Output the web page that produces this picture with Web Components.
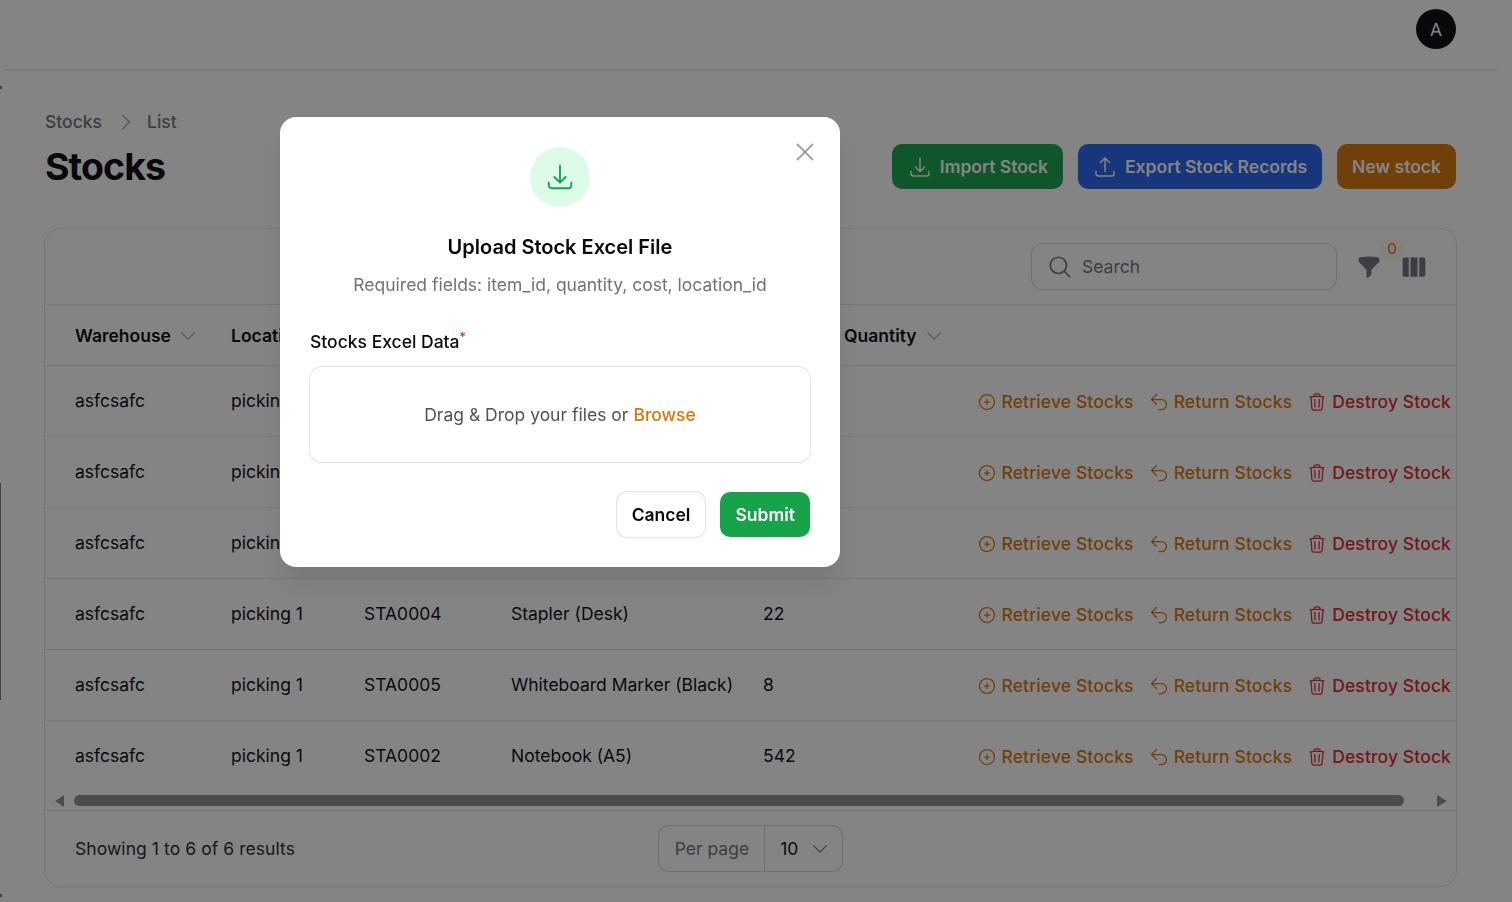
<!DOCTYPE html>
<html lang="en">
<head>
<meta charset="utf-8">
<title>Stocks</title>
<style>
  html, body { margin: 0; height: 100%; overflow: hidden; background: #fff; }
  body { font-family: Inter, "Liberation Sans", sans-serif; color: #09090b; font-size: 17.5px; }
</style>
</head>
<body>
<stock-page></stock-page>
<script>
const ICONS = {
  tray: '<path d="M3 16.5v2.25A2.25 2.25 0 005.25 21h13.5A2.25 2.25 0 0021 18.75V16.5M16.5 12L12 16.5m0 0L7.5 12m4.5 4.5V3"/>',
  upload: '<path d="M3 16.5v2.25A2.25 2.25 0 005.25 21h13.5A2.25 2.25 0 0021 18.75V16.5m-13.5-9L12 3m0 0l4.5 4.5M12 3v13.5"/>',
  close: '<path d="M6 18L18 6M6 6l12 12"/>',
  plus: '<path d="M12 9v6m3-3H9m12 0a9 9 0 11-18 0 9 9 0 0118 0z"/>',
  back: '<path d="M9 15L3 9m0 0l6-6M3 9h12a6 6 0 010 12h-3"/>',
  trash: '<path d="M14.74 9l-.346 9m-4.788 0L9.26 9m9.968-3.21c.342.052.682.107 1.022.166m-1.022-.165L18.16 19.673a2.25 2.25 0 01-2.244 2.077H8.084a2.25 2.25 0 01-2.244-2.077L4.772 5.79m14.456 0a48.108 48.108 0 00-3.478-.397m-12 .562c.34-.059.68-.114 1.022-.165m0 0a48.11 48.11 0 013.478-.397m7.5 0v-.916c0-1.18-.91-2.164-2.09-2.201a51.964 51.964 0 00-3.32 0c-1.18.037-2.09 1.022-2.09 2.201v.916m7.5 0a48.667 48.667 0 00-7.5 0"/>',
  search: '<path d="M21 21l-5.197-5.197m0 0A7.5 7.5 0 105.196 5.196a7.5 7.5 0 0010.607 10.607z"/>',
  down: '<path d="M19.5 8.25l-7.5 7.5-7.5-7.5"/>',
  right: '<path d="M8.25 4.5l7.5 7.5-7.5 7.5"/>',
  funnel: '<path fill="currentColor" stroke="none" d="M3.792 2.938A49.069 49.069 0 0112 2.25c2.797 0 5.54.236 8.209.688a1.857 1.857 0 011.541 1.836v1.044a3 3 0 01-.879 2.121l-6.182 6.182a1.5 1.5 0 00-.439 1.061v2.927a3 3 0 01-1.658 2.684l-1.757.878A.75.75 0 019.75 21v-5.818a1.5 1.5 0 00-.44-1.06L3.13 7.938a3 3 0 01-.879-2.121V4.774c0-.897.64-1.683 1.542-1.836z"/>',
  columns: '<path fill="currentColor" stroke="none" d="M15 3.75H9v16.5h6V3.75zM16.5 20.25h3.375c1.035 0 1.875-.84 1.875-1.875V5.625c0-1.036-.84-1.875-1.875-1.875H16.5v16.5zM4.125 3.75H7.5v16.5H4.125a1.875 1.875 0 01-1.875-1.875V5.625c0-1.036.84-1.875 1.875-1.875z"/>'
};

class HeroIcon extends HTMLElement {
  constructor() {
    super();
    const size = this.getAttribute('size') || 20;
    const sw = this.getAttribute('stroke') || 1.5;
    this.attachShadow({ mode: 'open' }).innerHTML = `
      <style>:host { display: inline-flex; flex: none; } svg { display: block; }</style>
      <svg width="${size}" height="${size}" viewBox="0 0 24 24" fill="none" stroke="currentColor" stroke-width="${sw}" stroke-linecap="round" stroke-linejoin="round">${ICONS[this.getAttribute('name')]}</svg>`;
  }
}
customElements.define('hero-icon', HeroIcon);

class UiButton extends HTMLElement {
  constructor() {
    super();
    const icon = this.getAttribute('icon');
    this.attachShadow({ mode: 'open' }).innerHTML = `
      <style>
        :host { display: inline-flex; align-items: center; gap: 8px; height: 45px; box-sizing: border-box; padding: 0 15px; border-radius: 10px;
          font-size: 17.5px; font-weight: 600; color: #fff; background: var(--bg, #16a34a); white-space: nowrap; }
        :host([plain]) { color: #09090b; background: #fff; box-shadow: 0 0 0 1px #e4e4e7, 0 1px 2px rgba(0,0,0,.05); }
      </style>
      ${icon ? `<hero-icon name="${icon}" size="24"></hero-icon>` : ''}<slot></slot>`;
  }
}
customElements.define('ui-button', UiButton);

class AppTopbar extends HTMLElement {
  constructor() {
    super();
    this.attachShadow({ mode: 'open' }).innerHTML = `
      <style>
        :host { display: flex; justify-content: flex-end; align-items: center; box-sizing: border-box; height: 70px; margin: 0 15px 0 5px; padding: 0 41px 11px 0; border-bottom: 1px solid #e4e4e7; box-shadow: 0 1px 1px rgba(0,0,0,.04); }
        .avatar { width: 40px; height: 40px; border-radius: 50%; background: #09090b; color: #fff; display: flex; align-items: center; justify-content: center; font-size: 17.5px; }
      </style>
      <div class="avatar">A</div>`;
  }
}
customElements.define('app-topbar', AppTopbar);

class PageHeader extends HTMLElement {
  constructor() {
    super();
    this.attachShadow({ mode: 'open' }).innerHTML = `
      <style>
        :host { display: flex; justify-content: space-between; align-items: flex-end; height: 119px; box-sizing: border-box; padding-top: 37px; }
        .title { padding-bottom: 1px; }
        .crumbs { display: flex; align-items: center; gap: 12px; color: #71717a; font-size: 17.5px; font-weight: 500; line-height: 24px; }
        .crumbs hero-icon { color: #a1a1aa; margin: 0 -2px 0 1px; }
        h1 { margin: 11px 0 0; font-size: 37.5px; line-height: 43px; font-weight: 700; letter-spacing: -.94px; }
        .actions { display: flex; gap: 15px; }
      </style>
      <div class="title">
        <div class="crumbs"><span>Stocks</span><hero-icon name="right" size="22"></hero-icon><span>List</span></div>
        <h1>Stocks</h1>
      </div>
      <div class="actions">
        <ui-button icon="tray" style="--bg:#16a34a;padding-left:16px">Import Stock</ui-button>
        <ui-button icon="upload" style="--bg:#2563eb">Export Stock Records</ui-button>
        <ui-button style="--bg:#d97706">New stock</ui-button>
      </div>`;
  }
}
customElements.define('page-header', PageHeader);

const COLS = '156px 133px 147px 252px 81px 1fr auto';

class TableHead extends HTMLElement {
  constructor() {
    super();
    const sort = t => `<span class="th">${t}<hero-icon name="down" size="20"></hero-icon></span>`;
    this.attachShadow({ mode: 'open' }).innerHTML = `
      <style>
        :host { display: grid; grid-template-columns: ${COLS}; align-items: center; height: 61px; padding: 1px 0 0 30px; box-sizing: border-box; border-bottom: 1px solid #e4e4e7; font-weight: 600; font-size: 17.5px; }
        .th { display: inline-flex; align-items: center; gap: 7px; white-space: nowrap; }
        hero-icon { color: #a1a1aa; }
      </style>
      ${sort('Warehouse')}${sort('Location')}<span></span><span></span><span></span>${sort('Quantity')}`;
  }
}
customElements.define('table-head', TableHead);

class ActionLink extends HTMLElement {
  constructor() {
    super();
    this.attachShadow({ mode: 'open' }).innerHTML = `
      <style>
        :host { display: inline-flex; align-items: center; gap: 5px; color: var(--c); font-weight: 500; font-size: 17.5px; letter-spacing: .12px; white-space: nowrap; }
      </style>
      <hero-icon name="${this.getAttribute('icon')}" size="20"></hero-icon><slot></slot>`;
  }
}
customElements.define('action-link', ActionLink);

class StockRow extends HTMLElement {
  constructor() {
    super();
    const a = n => this.getAttribute(n) || '';
    this.attachShadow({ mode: 'open' }).innerHTML = `
      <style>
        :host { display: grid; grid-template-columns: ${COLS}; align-items: center; height: 71px; padding: 0 0 2px 30px; box-sizing: border-box; border-bottom: 1px solid #e4e4e7; font-size: 17.5px; white-space: nowrap; }
        :host(:last-child) { border-bottom-color: transparent; }
        .acts { display: flex; gap: 15px; padding: 3px 5px 0 0; }
      </style>
      <span>${a('warehouse')}</span><span>${a('location')}</span><span>${a('code')}</span><span>${a('item')}</span><span>${a('qty')}</span><span></span>
      <div class="acts">
        <action-link icon="plus" style="--c:#d97706">Retrieve Stocks</action-link>
        <action-link icon="back" style="--c:#d97706">Return Stocks</action-link>
        <action-link icon="trash" style="--c:#dc2626">Destroy Stock</action-link>
      </div>`;
  }
}
customElements.define('stock-row', StockRow);

class TableToolbar extends HTMLElement {
  constructor() {
    super();
    this.attachShadow({ mode: 'open' }).innerHTML = `
      <style>
        :host { display: flex; justify-content: flex-end; align-items: center; height: 76px; box-sizing: border-box; padding: 0 28px 0 0; border-bottom: 1px solid #e4e4e7; }
        .search { display: flex; align-items: center; gap: 9px; width: 304px; height: 45px; box-sizing: border-box; padding-left: 15px; border-radius: 11px; box-shadow: 0 0 0 1px #d4d4d8; color: #71717a; font-size: 17.5px; margin-right: 20px; }
        .filter { position: relative; display: flex; margin-right: 18px; color: #71717a; }
        .badge { position: absolute; top: -14px; left: 27px; width: 18px; height: 18px; border-radius: 6px; background: #fffbeb; box-shadow: 0 0 0 1px #fef3c7; color: #d97706; font-size: 15px; display: flex; align-items: center; justify-content: center; }
        .cols { display: flex; color: #71717a; }
      </style>
      <div class="search"><hero-icon name="search" size="26"></hero-icon><span>Search</span></div>
      <div class="filter"><hero-icon name="funnel" size="26"></hero-icon><span class="badge">0</span></div>
      <div class="cols"><hero-icon name="columns" size="28"></hero-icon></div>`;
  }
}
customElements.define('table-toolbar', TableToolbar);

class TableScrollbar extends HTMLElement {
  constructor() {
    super();
    this.attachShadow({ mode: 'open' }).innerHTML = `
      <style>
        :host { display: flex; align-items: center; height: 18px; padding: 0 9px 1px 10px; box-sizing: border-box; }
        .thumb { flex: 1; height: 11px; border-radius: 6px; background: #8f8f8f; margin: 0 33px 0 10px; }
        .arr { width: 0; height: 0; border-top: 6px solid transparent; border-bottom: 6px solid transparent; }
        .l { border-right: 9px solid #8f8f8f; }
        .r { border-left: 10px solid #8f8f8f; }
      </style>
      <span class="arr l"></span><div class="thumb"></div><span class="arr r"></span>`;
  }
}
customElements.define('table-scrollbar', TableScrollbar);

class TableFooter extends HTMLElement {
  constructor() {
    super();
    this.attachShadow({ mode: 'open' }).innerHTML = `
      <style>
        :host { display: grid; grid-template-columns: 1fr auto 1fr; align-items: center; height: 76px; padding: 0 30px; box-sizing: border-box; border-top: 1px solid #e4e4e7; font-size: 17.5px; color: #27272a; }
        .count { letter-spacing: .07px; }
        .pp { display: flex; height: 45px; border-radius: 10px; box-shadow: 0 0 0 1px #d4d4d8; align-items: center; }
        .lbl { padding: 0 15px 0 16px; color: #71717a; line-height: 45px; border-right: 1px solid #d4d4d8; }
        .val { display: flex; align-items: center; gap: 12px; padding: 0 12px 0 15px; color: #09090b; }
        hero-icon { color: #71717a; }
      </style>
      <span class="count">Showing 1 to 6 of 6 results</span>
      <div class="pp"><span class="lbl">Per page</span><span class="val">10<hero-icon name="down" size="20"></hero-icon></span></div>
      <span></span>`;
  }
}
customElements.define('table-footer', TableFooter);

class StockTable extends HTMLElement {
  constructor() {
    super();
    this.attachShadow({ mode: 'open' }).innerHTML = `
      <style>
        :host { display: block; height: 657px; box-sizing: border-box; margin-top: 40px; border-radius: 16px; box-shadow: 0 0 0 1px #e4e4e7, 0 1px 2px rgba(0,0,0,.05); background: #fff; overflow: hidden; }
      </style>
      <table-toolbar></table-toolbar><table-head></table-head><slot></slot><table-scrollbar></table-scrollbar><table-footer></table-footer>`;
  }
}
customElements.define('stock-table', StockTable);

class UploadModal extends HTMLElement {
  constructor() {
    super();
    this.attachShadow({ mode: 'open' }).innerHTML = `
      <style>
        :host { position: fixed; inset: 0; background: rgba(9,9,11,.5); display: block; }
        .win { position: absolute; left: 280px; top: 117px; width: 560px; height: 450px; box-sizing: border-box; padding: 30px 30px 0; background: #fff; border-radius: 16px; box-shadow: 0 20px 25px -5px rgba(0,0,0,.1); display: flex; flex-direction: column; }
        .x { position: absolute; top: 20px; right: 20px; color: #a1a1aa; }
        .circle { align-self: center; width: 60px; height: 60px; border-radius: 50%; background: #dcfce7; color: #16a34a; display: flex; align-items: center; justify-content: center; }
        h2 { margin: 26px 0 0; text-align: center; font-size: 20px; line-height: 28px; font-weight: 600; }
        p { margin: 11px 0 0; text-align: center; color: #71717a; font-size: 17.5px; line-height: 26px; }
        label { display: block; margin-top: 32px; font-weight: 500; font-size: 17.5px; line-height: 24px; }
        sup { color: #dc2626; font-size: 12px; line-height: 0; }
        .drop { margin-top: 13px; height: 95px; border-radius: 12px; box-shadow: 0 0 0 1px #e4e4e7, 0 1px 2px rgba(0,0,0,.05); display: flex; align-items: center; justify-content: center; color: #52525b; font-size: 17.5px; }
        .drop b { font-weight: 500; color: #d97706; margin-left: 5px; }
        .foot { display: flex; justify-content: flex-end; gap: 15px; margin-top: 30px; }
      </style>
      <div class="win">
        <hero-icon class="x" name="close" size="30"></hero-icon>
        <div class="circle"><hero-icon name="tray" size="30"></hero-icon></div>
        <h2>Upload Stock Excel File</h2>
        <p>Required fields: item_id, quantity, cost, location_id</p>
        <label>Stocks Excel Data<sup>*</sup></label>
        <div class="drop"><span>Drag &amp; Drop your files or</span><b>Browse</b></div>
        <div class="foot"><ui-button plain>Cancel</ui-button><ui-button>Submit</ui-button></div>
      </div>`;
  }
}
customElements.define('upload-modal', UploadModal);

class StockPage extends HTMLElement {
  constructor() {
    super();
    const rows = [
      ['', ''], ['', ''], ['', ''],
      ['STA0004', 'Stapler (Desk)', '22'],
      ['STA0005', 'Whiteboard Marker (Black)', '8'],
      ['STA0002', 'Notebook (A5)', '542']
    ].map(r => `<stock-row warehouse="asfcsafc" location="picking 1" code="${r[0]}" item="${r[1]}" qty="${r[2] || ''}"></stock-row>`).join('');
    this.attachShadow({ mode: 'open' }).innerHTML = `
      <style>
        :host { display: block; }
        main { padding: 0 56px 0 45px; }
        /* bits of the collapsed sidebar that show at the window edge */
        .edge { position: absolute; left: 0; background: #7a7a7a; }
        .line { top: 483px; width: 1px; height: 217px; }
        .dot { width: 2px; height: 3px; }
      </style>
      <app-topbar></app-topbar>
      <main>
        <page-header></page-header>
        <stock-table>${rows}</stock-table>
      </main>
      <span class="edge line"></span>
      <span class="edge dot" style="top:86px"></span>
      <span class="edge dot" style="top:894px"></span>
      <upload-modal></upload-modal>`;
  }
}
customElements.define('stock-page', StockPage);
</script>
</body>
</html>
